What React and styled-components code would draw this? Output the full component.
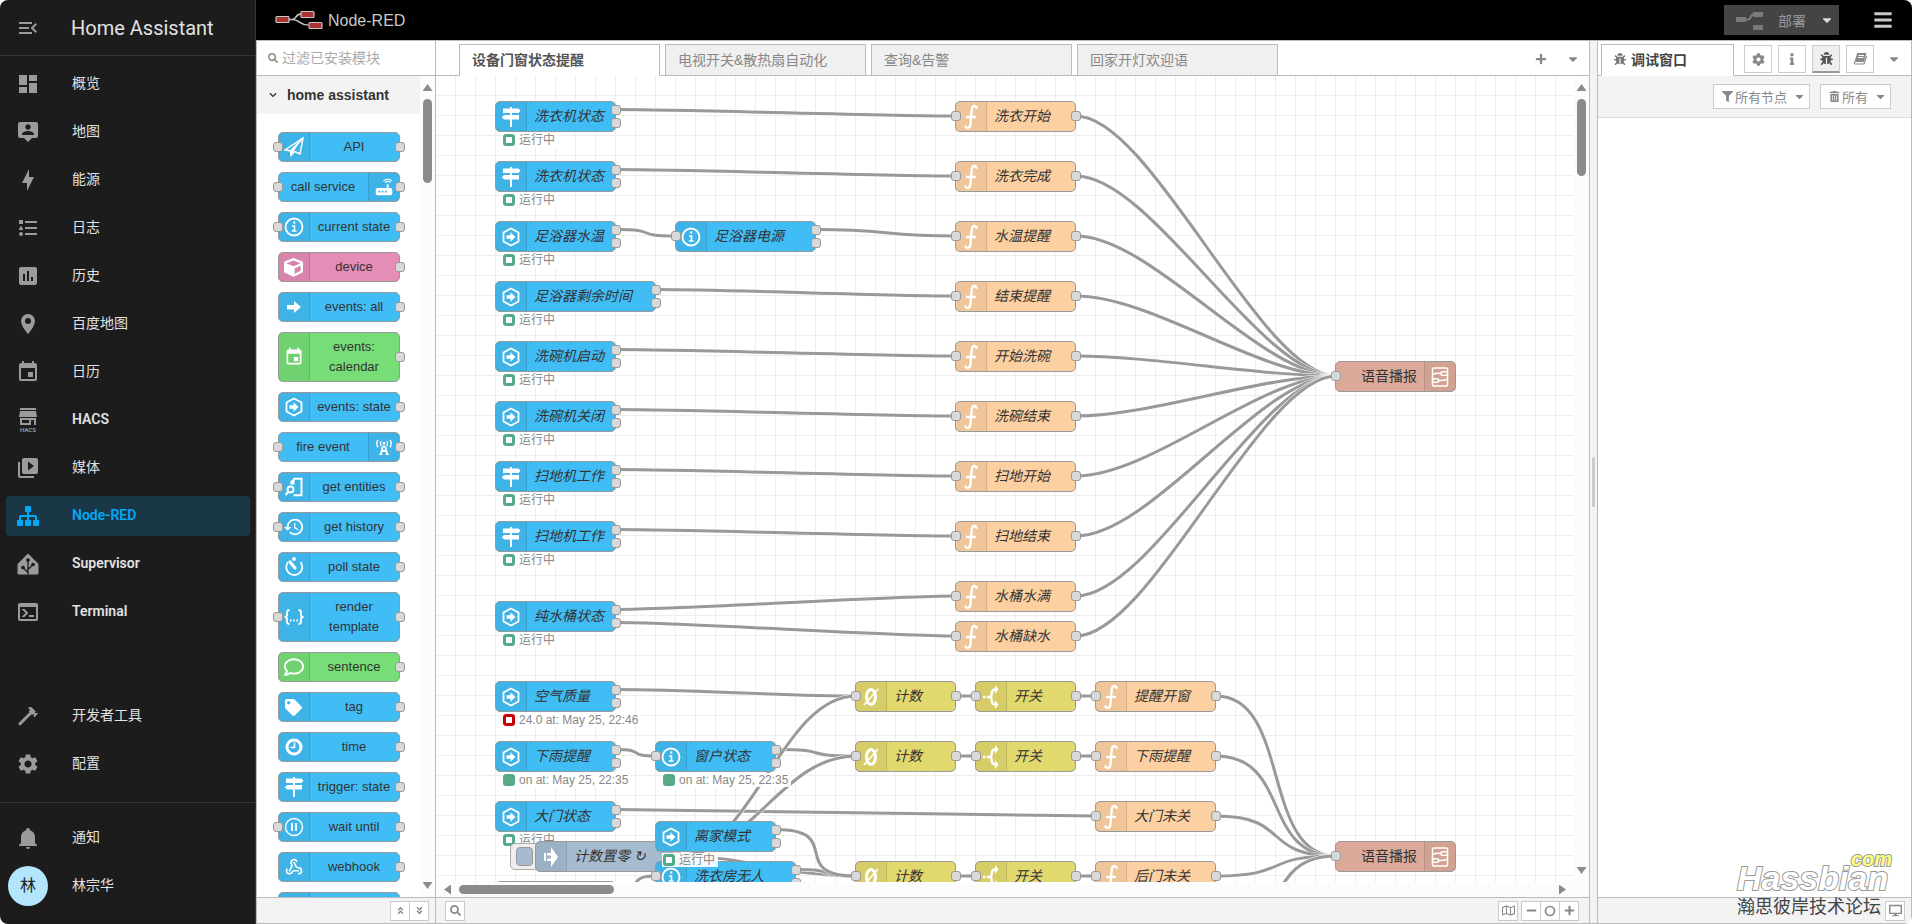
import React from 'react';
import styled, { createGlobalStyle, css } from 'styled-components';
import {
  FaAngleDoubleDown,
  FaAngleDoubleUp,
  FaBars,
  FaBug,
  FaCaretDown,
  FaChevronDown,
  FaCog,
  FaCube,
  FaDesktop,
  FaFilter,
  FaInfo,
  FaMinus,
  FaPlus,
  FaRegComment,
  FaRegMap,
  FaSearch,
  FaTag,
  FaTrashAlt,
} from 'react-icons/fa';
import { MdHistory, MdRouter, MdSettings } from 'react-icons/md';
import { Webhook } from 'lucide-react';

const NODE_WIDTH = 100;
const NODE_HEIGHT = 30;

const COLORS = {
  ha: '#41bdf5',
  device: '#e58cb7',
  green: '#77dd77',
  func: '#fdd0a2',
  logic: '#e2d96e',
  subflow: '#ddaa99',
  inject: '#a6bbcf',
};

/* ---------- icons ---------- */

const mdi = {
  menuOpen:
    'M21,15.61L19.59,17L14.58,12L19.59,7L21,8.39L17.44,12L21,15.61M3,6H16V8H3V6M3,13V11H13V13H3M3,18V16H16V18H3Z',
  dashboard: 'M13,3V9H21V3M13,21H21V11H13M3,21H11V15H3M3,13H11V3H3V13Z',
  map:
    'M20,2H4A2,2 0 0,0 2,4V16A2,2 0 0,0 4,18H8L12,22L16,18H20A2,2 0 0,0 22,16V4A2,2 0 0,0 20,2M12,4.3C13.5,4.3 14.7,5.5 14.7,7C14.7,8.5 13.5,9.7 12,9.7C10.5,9.7 9.3,8.5 9.3,7C9.3,5.5 10.5,4.3 12,4.3M18,15H6V14.1C6,12.1 10,11 12,11C14,11 18,12.1 18,14.1V15Z',
  energy: 'M11 15H6L13 1V9H18L11 23V15Z',
  logbook:
    'M5,9.5L7.5,14H2.5L5,9.5M3,4H7V8H3V4M5,20A2,2 0 0,0 7,18A2,2 0 0,0 5,16A2,2 0 0,0 3,18A2,2 0 0,0 5,20M9,5V7H21V5H9M9,19H21V17H9V19M9,13H21V11H9V13Z',
  history:
    'M9 17H7V10H9V17M13 17H11V7H13V17M17 17H15V13H17V17M19 3H5C3.89 3 3 3.89 3 5V19A2 2 0 0 0 5 21H19A2 2 0 0 0 21 19V5C21 3.89 20.1 3 19 3Z',
  marker:
    'M12,12A3,3 0 0,1 9,9A3,3 0 0,1 12,6A3,3 0 0,1 15,9A3,3 0 0,1 12,12M12,2A7,7 0 0,0 5,9C5,14.25 12,22 12,22C12,22 19,14.25 19,9A7,7 0 0,0 12,2Z',
  calendar:
    'M19,19H5V8H19M16,1V3H8V1H6V3H5C3.89,3 3,3.89 3,5V19A2,2 0 0,0 5,21H19A2,2 0 0,0 21,19V5C21,3.89 20.1,3 19,3H18V1M17,12H12V17H17V12Z',
  media:
    'M4 6H2V20C2 21.11 2.9 22 4 22H18V20H4V6M20 2H8C6.9 2 6 2.9 6 4V16C6 17.11 6.9 18 8 18H20C21.11 18 22 17.11 22 16V4C22 2.89 21.1 2 20 2M12 14.5V5.5L18 10L12 14.5Z',
  sitemap:
    'M9,2V8H11V11H5C3.89,11 3,11.89 3,13V16H1V22H7V16H5V13H11V16H9V22H15V16H13V13H19V16H17V22H23V16H21V13C21,11.89 20.11,11 19,11H13V8H15V2H9Z',
  console:
    'M20,19V7H4V19H20M20,3A2,2 0 0,1 22,5V19A2,2 0 0,1 20,21H4A2,2 0 0,1 2,19V5C2,3.89 2.9,3 4,3H20M13,17V15H18V17H13M9.58,13L5.57,9H8.4L11.7,12.3C12.09,12.69 12.09,13.33 11.7,13.72L8.42,17H5.59L9.58,13Z',
  hammer:
    'M2,19.63L13.43,8.2L12.72,7.5L14.14,6.07L12,3.89C13.2,2.7 15.09,2.7 16.27,3.89L19.87,7.5L18.45,8.91H21.29L22,9.62L18.45,13.21L17.74,12.5V9.62L16.27,11.04L15.56,10.33L4.13,21.76L2,19.63Z',
  bell:
    'M21,19V20H3V19L5,17V11C5,7.9 7.03,5.17 10,4.29C10,4.19 10,4.1 10,4A2,2 0 0,1 12,2A2,2 0 0,1 14,4C14,4.1 14,4.19 14,4.29C16.97,5.17 19,7.9 19,11V17L21,19M14,21A2,2 0 0,1 12,23A2,2 0 0,1 10,21',
};

const Mdi = ({ name, size = 24 }) => (
  <svg width={size} height={size} viewBox="0 0 24 24" fill="currentColor" fillRule="evenodd">
    <path d={mdi[name]} />
  </svg>
);

const HacsIcon = () => (
  <svg width="24" height="26" viewBox="0 0 24 26" fill="currentColor">
    <path d="M4 1H20V3H4ZM4 4H20L21 10H3ZM4 11H20V18H18V13H15V18H4ZM6 13V16H13V13Z" fillRule="evenodd" />
    <text x="12" y="25" fontSize="6" fontWeight="700" textAnchor="middle">HACS</text>
  </svg>
);

const SupervisorIcon = () => (
  <svg width="24" height="24" viewBox="0 0 24 24" fill="none">
    <path d="M12 1.500L22 11.500Q22.500 12 22.500 13V21Q22.500 22.500 21 22.500H3Q1.500 22.500 1.500 21V13Q1.500 12 2 11.500Z" fill="currentColor" />
    <g stroke="#1c1c1c" strokeWidth="1.300">
      <path d="M12 22.500V8M12 20.500L7 15.500M12 17.500L17 12.500" />
      <g fill="#1c1c1c">
        <circle cx="12" cy="8" r="1.200" />
        <circle cx="7" cy="15.500" r="1.200" />
        <circle cx="17" cy="12.500" r="1.200" />
      </g>
    </g>
  </svg>
);

const BookIcon = () => (
  <svg width="14" height="12" viewBox="0 0 14 12" fill="none" stroke="currentColor">
    <path d="M4.200 0H13.500L10.800 9H1.500Z" fill="currentColor" stroke="none" />
    <path d="M1.500 8.500Q.8 11 2.500 11H11L13.600 3" strokeWidth="1.200" />
    <path d="M5.500 2.500H11M5 4.500H10.300" stroke="#fff" strokeWidth="1" />
  </svg>
);

const ResetIcon = () => (
  <svg width="12" height="12" viewBox="0 0 12 12" fill="none" stroke="currentColor" strokeWidth="1.700">
    <circle cx="6" cy="6" r="4.500" />
  </svg>
);

const Line = ({ children, size = 20, width = 2 }) => (
  <svg
    width={size}
    height={size}
    viewBox="0 0 20 20"
    fill="none"
    stroke="currentColor"
    strokeWidth={width}
  >
    {children}
  </svg>
);

const Fill = ({ children, width = 20, height = 20 }) => (
  <svg width={width} height={height} viewBox={`0 0 ${width} ${height}`} fill="currentColor" fillRule="evenodd">
    {children}
  </svg>
);

const icons = {
  plane: (
    <Line width={1.5}>
      <path d="M1 13L19 1L16 17L10.500 14.500L7 18.500L6.500 14Z" />
      <path d="M7 14L18 2L9 15L7 18.500Z" fill="currentColor" stroke="none" />
      <path d="M6.500 14L18 2" />
    </Line>
  ),
  router: <MdRouter size={22} />,
  info: (
    <Line>
      <circle cx="10" cy="10" r="8.500" strokeWidth="1.800" />
      <path d="M8 9H10.500V14M7.800 14H12.500" strokeWidth="1.600" />
      <path d="M9.300 5.500H11.300" strokeWidth="2.200" />
    </Line>
  ),
  cube: <FaCube size={19} />,
  arrow: (
    <Fill>
      <path d="M3 8H10V4L17 10L10 16V12.500H3Z" />
    </Fill>
  ),
  calendar: <Mdi name="calendar" size={20} />,
  hex: (
    <Line>
      <path d="M10 1.500L17.500 5.500V14.500L10 18.500L2.500 14.500V5.500Z" strokeWidth="1.800" />
      <path d="M5.500 8.300H9.500V5.300L14.500 10L9.500 14.700V11.700H5.500Z" fill="currentColor" stroke="none" />
    </Line>
  ),
  tower: (
    <Line size={16} width={1.7}>
      <path d="M8.500 9.500L6 19M11.500 9.500L14 19M8.500 9.500H11.500M7 15H13" strokeWidth="2.200" />
      <path d="M4 19H8M12 19H16" />
      <circle cx="10" cy="5.500" r="1.800" fill="currentColor" stroke="none" />
      <path d="M6.500 2.500Q4.800 5.500 6.500 9M13.500 2.500Q15.200 5.500 13.500 9M2.500 1Q-.5 5.500 2.500 10.500M17.500 1Q20.500 5.500 17.500 10.500" />
    </Line>
  ),
  entities: (
    <Line width={2}>
      <path d="M7.500 7V5L10.500 1.800H17.500V18.200H9.500" />
      <path d="M6.500 7.500V5L10.500 1.500V7.500Z" fill="currentColor" stroke="none" />
      <circle cx="6.500" cy="12.500" r="3" />
      <path d="M4.500 14.500L1.500 18" />
    </Line>
  ),
  historyClock: <MdHistory size={22} />,
  timer: (
    <Line width={1.8}>
      <path d="M4 5A8 8 0 1 0 16.500 5" />
      <path d="M6 5L11 11" strokeWidth="3.200" strokeLinecap="round" />
      <circle cx="10" cy="2" r="1" fill="currentColor" />
    </Line>
  ),
  braces: (
    <Line width={1.8}>
      <path d="M5.500 3Q3 3 3 5.500V8Q3 10 .5 10Q3 10 3 12V14.500Q3 17 5.500 17M14.500 3Q17 3 17 5.500V8Q17 10 19.500 10Q17 10 17 12V14.500Q17 17 14.500 17" />
      <path d="M6 13.500H14" strokeDasharray="1.500 1.700" />
    </Line>
  ),
  comment: <FaRegComment size={20} />,
  tag: <FaTag size={17} />,
  clock: (
    <Line width={3}>
      <circle cx="10" cy="10" r="7" />
      <path d="M10.500 5.500V10.500H6.500" strokeWidth="1.600" />
    </Line>
  ),
  signs: (
    <Fill>
      <path d="M9 0H11V1.500H17.500L19.500 3.500L17.500 6H11V8H18V12.500H11V20H9V12.500H3L.8 10.200L3 8H9V6H2V1.500H9Z" />
    </Fill>
  ),
  pause: (
    <Line width={1.4}>
      <circle cx="10" cy="10" r="8.500" />
      <path d="M8 6V14M12 6V14" strokeWidth="1.800" />
    </Line>
  ),
  webhook: <Webhook size={18} strokeWidth={2.2} />,
  func: (
    <svg width="14" height="26" viewBox="0 0 14 26" fill="none" stroke="currentColor" strokeWidth="2.400" strokeLinecap="round">
      <path d="M12.500 3.800Q12 2 10 2Q8 2.200 7.700 6L6.500 20Q6 23.500 4.200 24Q2 24.300 1.500 22.500M3 13H11" />
    </svg>
  ),
  counter: (
    <svg width="18" height="22" viewBox="0 0 18 22" fill="none" stroke="currentColor" strokeWidth="3">
      <ellipse cx="9" cy="11" rx="4.500" ry="7.500" />
      <path d="M16 3L2 19" strokeWidth="1.600" />
    </svg>
  ),
  fork: (
    <svg width="18" height="24" viewBox="0 0 18 24" fill="none" stroke="currentColor" strokeWidth="2.400">
      <path d="M1 12H3.500M5 12H9M9 12L10 7Q10.500 4.500 13.500 4.500M9 12L10 17Q10.500 19.500 13.500 19.500" />
      <path d="M13 0L16.500 4.500L13 9ZM13 15L16.500 19.500L13 24Z" fill="currentColor" stroke="none" />
    </svg>
  ),
  inject: (
    <Fill width={16} height={22}>
      <path d="M1 7H3V15H1ZM4 7H8V1L15 11L8 21V15H4V12.500H8V9.500H4Z" />
    </Fill>
  ),
  subflow: (
    <svg width="18" height="20" viewBox="0 0 18 20" fill="none" stroke="currentColor" strokeWidth="1.500">
      <rect x="1.500" y="1" width="15" height="18" rx="1" />
      <path d="M1.500 7.500Q5 5.500 10 6.500M7.500 13.500Q12 14 16.500 12" />
      <rect x="10" y="4.800" width="6.500" height="3.400" rx="1" />
      <rect x="1.500" y="11.800" width="6" height="3.400" rx="1" />
    </svg>
  ),
};

const NodeRedLogo = () => (
  <svg width="48" height="20" viewBox="0 0 48 20" fill="none">
    <path d="M13 9.500H17C22 9.500 20 4 26 4M17 9.500C25 9.500 24 15 33 15" stroke="#c7c7c7" strokeWidth="1.600" />
    <g fill="#aa3333" stroke="#c7c7c7" strokeWidth="1.200">
      <rect x="1" y="6.500" width="13" height="6" rx="1" />
      <rect x="26" y="1.500" width="13" height="6" rx="1" />
      <rect x="34" y="12.500" width="13" height="6" rx="1" />
    </g>
  </svg>
);

const DeployIcon = () => (
  <svg width="28" height="20" viewBox="0 0 28 20">
    <path d="M9 9.500H12C16 9.500 13 4.500 18 4.500" fill="none" stroke="#7a7a7a" strokeWidth="2" />
    <g fill="#7a7a7a">
      <rect x="0" y="7" width="10" height="5" />
      <rect x="17" y="2" width="10" height="5" />
      <rect x="17" y="15" width="10" height="5" />
    </g>
  </svg>
);

/* ---------- data ---------- */

const menu = [
  { label: '概览', icon: <Mdi name="dashboard" /> },
  { label: '地图', icon: <Mdi name="map" /> },
  { label: '能源', icon: <Mdi name="energy" /> },
  { label: '日志', icon: <Mdi name="logbook" /> },
  { label: '历史', icon: <Mdi name="history" /> },
  { label: '百度地图', icon: <Mdi name="marker" /> },
  { label: '日历', icon: <Mdi name="calendar" /> },
  { label: 'HACS', icon: <HacsIcon />, strong: true },
  { label: '媒体', icon: <Mdi name="media" /> },
  { label: 'Node-RED', icon: <Mdi name="sitemap" />, active: true, strong: true },
  { label: 'Supervisor', icon: <SupervisorIcon />, strong: true },
  { label: 'Terminal', icon: <Mdi name="console" />, strong: true },
];

const paletteNodes = [
  { label: 'API', icon: 'plane', input: true },
  { label: 'call service', icon: 'router', input: true, right: true },
  { label: 'current state', icon: 'info', input: true },
  { label: 'device', icon: 'cube', color: COLORS.device },
  { label: 'events: all', icon: 'arrow' },
  { label: 'events: calendar', icon: 'calendar', color: COLORS.green },
  { label: 'events: state', icon: 'hex' },
  { label: 'fire event', icon: 'tower', input: true, right: true },
  { label: 'get entities', icon: 'entities', input: true },
  { label: 'get history', icon: 'historyClock', input: true },
  { label: 'poll state', icon: 'timer' },
  { label: 'render template', icon: 'braces', input: true },
  { label: 'sentence', icon: 'comment', color: COLORS.green },
  { label: 'tag', icon: 'tag' },
  { label: 'time', icon: 'clock' },
  { label: 'trigger: state', icon: 'signs' },
  { label: 'wait until', icon: 'pause', input: true },
  { label: 'webhook', icon: 'webhook' },
  { label: '', icon: 'marker' },
];

const tabs = ['设备门窗状态提醒', '电视开关&散热扇自动化', '查询&告警', '回家开灯欢迎语'];

const running = { text: '运行中', color: '#5a8', ring: true };

const ha = (id, label, x, y, icon, status, w = 120) => ({
  id, label, x, y, w, icon, status, color: COLORS.ha, outputs: 2, input: icon === 'info',
});
const fn = (id, label, x, y) => ({
  id, label, x, y, w: 120, icon: 'func', color: COLORS.func, outputs: 1, input: true,
});
const logic = (id, label, x, y, icon) => ({
  id, label, x, y, w: 100, icon, color: COLORS.logic, outputs: 1, input: true,
});
const speak = (id, y) => ({
  id, label: '语音播报', x: 900, y, w: 120, icon: 'subflow', color: COLORS.subflow, outputs: 0, input: true, right: true,
});

const nodes = [
  ha('a1', '洗衣机状态', 60, 40, 'signs', running),
  ha('a2', '洗衣机状态', 60, 100, 'signs', running),
  ha('a3', '足浴器水温', 60, 160, 'hex', running),
  ha('a3b', '足浴器电源', 240, 160, 'info', null, 140),
  ha('a4', '足浴器剩余时间', 60, 220, 'hex', running, 160),
  ha('a5', '洗碗机启动', 60, 280, 'hex', running),
  ha('a6', '洗碗机关闭', 60, 340, 'hex', running),
  ha('a7', '扫地机工作', 60, 400, 'signs', running),
  ha('a8', '扫地机工作', 60, 460, 'signs', running),
  ha('a9', '纯水桶状态', 60, 540, 'hex', running),
  fn('f1', '洗衣开始', 520, 40),
  fn('f2', '洗衣完成', 520, 100),
  fn('f3', '水温提醒', 520, 160),
  fn('f4', '结束提醒', 520, 220),
  fn('f5', '开始洗碗', 520, 280),
  fn('f6', '洗碗结束', 520, 340),
  fn('f7', '扫地开始', 520, 400),
  fn('f8', '扫地结束', 520, 460),
  fn('f9', '水桶水满', 520, 520),
  fn('f10', '水桶缺水', 520, 560),
  speak('s1', 300),
  ha('b1', '空气质量', 60, 620, 'hex', { text: '24.0 at: May 25, 22:46', color: '#c00', ring: true }),
  ha('b2', '下雨提醒', 60, 680, 'hex', { text: 'on at: May 25, 22:35', color: '#5a8' }),
  ha('b2b', '窗户状态', 220, 680, 'info', { text: 'on at: May 25, 22:35', color: '#5a8' }),
  ha('b3', '大门状态', 60, 740, 'hex', running),
  ha('b5', '', 60, 820, 'hex', null),
  {
    id: 'inject', label: '计数置零 ↻', x: 100, y: 780, w: 140, icon: 'inject', color: COLORS.inject, outputs: 1, button: true,
  },
  ha('b4', '洗衣房无人', 220, 800, 'info', null, 140),
  ha('home', '离家模式', 220, 760, 'hex', running),
  logic('c1', '计数', 420, 620, 'counter'),
  logic('c2', '计数', 420, 680, 'counter'),
  logic('c3', '计数', 420, 800, 'counter'),
  logic('k1', '开关', 540, 620, 'fork'),
  logic('k2', '开关', 540, 680, 'fork'),
  logic('k3', '开关', 540, 800, 'fork'),
  fn('g1', '提醒开窗', 660, 620),
  fn('g2', '下雨提醒', 660, 680),
  fn('g3', '大门未关', 660, 740),
  fn('g4', '后门未关', 660, 800),
  fn('g5', '', 660, 860),
  speak('s2', 780),
];

// [from, output index, to]
const wires = [
  ['a1', 0, 'f1'], ['a2', 0, 'f2'], ['a3', 0, 'a3b'], ['a3b', 0, 'f3'], ['a4', 0, 'f4'],
  ['a5', 0, 'f5'], ['a6', 0, 'f6'], ['a7', 0, 'f7'], ['a8', 0, 'f8'],
  ['a9', 0, 'f9'], ['a9', 1, 'f10'],
  ['f1', 0, 's1'], ['f2', 0, 's1'], ['f3', 0, 's1'], ['f4', 0, 's1'], ['f5', 0, 's1'],
  ['f6', 0, 's1'], ['f7', 0, 's1'], ['f8', 0, 's1'], ['f9', 0, 's1'], ['f10', 0, 's1'],
  ['b3', 0, 'g3'], ['b1', 0, 'c1'], ['b2', 0, 'b2b'], ['b2b', 0, 'c2'],
  ['inject', 0, 'c1'], ['inject', 0, 'c2'], ['inject', 0, 'c3'],
  ['b5', 0, 'b4'], ['b4', 0, 'c3'], ['home', 0, 'c3'],
  ['c1', 0, 'k1'], ['c2', 0, 'k2'], ['c3', 0, 'k3'],
  ['k1', 0, 'g1'], ['k2', 0, 'g2'], ['k3', 0, 'g4'],
  ['g1', 0, 's2'], ['g2', 0, 's2'], ['g3', 0, 's2'], ['g4', 0, 's2'], ['g5', 0, 's2'],
];

const nodeById = Object.fromEntries(nodes.map((node) => [node.id, node]));

const portOffset = (index, count) => (index - (count - 1) / 2) * 13;

const wirePath = ([from, index, to]) => {
  const source = nodeById[from];
  const target = nodeById[to];
  const x1 = source.x + source.w;
  const y1 = source.y + portOffset(index, source.outputs);
  const x2 = target.x;
  const y2 = target.y;
  const delta = Math.hypot(x2 - x1, y2 - y1);
  const scale = delta < NODE_WIDTH ? 0.75 - 0.75 * ((NODE_WIDTH - delta) / NODE_WIDTH) : 0.75;
  const reach = scale * NODE_WIDTH;
  return `M${x1} ${y1}C${x1 + reach} ${y1} ${x2 - reach} ${y2} ${x2} ${y2}`;
};

/* ---------- components ---------- */

const Ports = ({ input, outputs }) => (
  <>
    {input && <Port $side="left" $offset={0} />}
    {Array.from({ length: outputs }, (_, i) => (
      <Port key={i} $side="right" $offset={portOffset(i, outputs)} />
    ))}
  </>
);

const FlowNode = ({ node }) => (
  <FlowNodeBox
    $color={node.color}
    style={{ left: node.x, top: node.y - NODE_HEIGHT / 2, width: node.w }}
  >
    {node.button && (
      <InjectFrame>
        <InjectButton type="button" aria-label={node.label} />
      </InjectFrame>
    )}
    <FlowNodeBody $color={node.color} $right={node.right}>
      <IconCell $right={node.right}>{icons[node.icon]}</IconCell>
      <FlowLabel $right={node.right}>{node.label}</FlowLabel>
    </FlowNodeBody>
    <Ports input={node.input} outputs={node.outputs} />
    {node.status && (
      <Status>
        <StatusDot $color={node.status.color} $ring={node.status.ring} />
        {node.status.text}
      </Status>
    )}
  </FlowNodeBox>
);

const ScrollBar = ({ horizontal, length }) => (
  <ScrollTrack $horizontal={horizontal}>
    <ScrollArrow $dir={horizontal ? 'left' : 'up'} />
    <ScrollThumb $horizontal={horizontal} $length={length} />
    <ScrollArrow $dir={horizontal ? 'right' : 'down'} />
  </ScrollTrack>
);

const MenuEntry = ({ item }) => (
  <MenuLink href="#" $active={item.active} $strong={item.strong}>
    <MenuIcon>{item.icon}</MenuIcon>
    <MenuText>{item.label}</MenuText>
  </MenuLink>
);

const Sidebar = () => (
  <SidebarBox>
    <SidebarHeader>
      <MenuToggle type="button" aria-label="menu">
        <Mdi name="menuOpen" />
      </MenuToggle>
      Home Assistant
    </SidebarHeader>
    <MenuList>
      {menu.map((item) => (
        <MenuEntry key={item.label} item={item} />
      ))}
      <MenuSpacer />
      <MenuEntry item={{ label: '开发者工具', icon: <Mdi name="hammer" /> }} />
      <MenuEntry item={{ label: '配置', icon: <MdSettings size={24} /> }} />
    </MenuList>
    <MenuFooter>
      <MenuEntry item={{ label: '通知', icon: <Mdi name="bell" /> }} />
      <MenuEntry item={{ label: '林宗华', icon: <Avatar>林</Avatar> }} />
    </MenuFooter>
  </SidebarBox>
);

const Palette = () => (
  <PaletteBox>
    <PaletteSearch>
      <FaSearch size={10} />
      <PaletteInput type="text" aria-label="过滤已安装模块" placeholder="过滤已安装模块" />
    </PaletteSearch>
    <PaletteScroll>
      <PaletteContent>
        <CategoryHeader type="button">
          <FaChevronDown size={8} />
          home assistant
        </CategoryHeader>
        <PaletteList>
          {paletteNodes.map((node) => (
            <PaletteNode key={node.icon} $color={node.color || COLORS.ha} $right={node.right}>
              <IconCell $right={node.right}>
                {icons[node.icon] || <Mdi name={node.icon} size={20} />}
              </IconCell>
              <PaletteLabel>{node.label}</PaletteLabel>
              <Ports input={node.input} outputs={1} />
            </PaletteNode>
          ))}
        </PaletteList>
      </PaletteContent>
      <ScrollBar length={84} />
    </PaletteScroll>
    <Footer>
      <ButtonGroup>
        <FooterButton type="button" aria-label="collapse all"><FaAngleDoubleUp size={9} /></FooterButton>
        <FooterButton type="button" aria-label="expand all"><FaAngleDoubleDown size={9} /></FooterButton>
      </ButtonGroup>
    </Footer>
  </PaletteBox>
);

const Workspace = () => (
  <WorkspaceBox>
    <TabBar>
      {tabs.map((tab, i) => (
        <Tab key={tab} type="button" $active={i === 0}>{tab}</Tab>
      ))}
      <TabActions>
        <BareButton type="button" aria-label="add flow"><FaPlus size={12} /></BareButton>
        <BareButton type="button" aria-label="list flows"><FaCaretDown size={14} /></BareButton>
      </TabActions>
    </TabBar>
    <CanvasRow>
      <Canvas>
        <Wires>
          {wires.map((wire) => (
            <g key={wire.join('-')}>
              <path d={wirePath(wire)} stroke="#fff" strokeWidth="4" />
              <path d={wirePath(wire)} stroke="#999" strokeWidth="3" />
            </g>
          ))}
        </Wires>
        {nodes.map((node) => (
          <FlowNode key={node.id} node={node} />
        ))}
      </Canvas>
      <ScrollBar length={77} />
    </CanvasRow>
    <ScrollBar horizontal length={155} />
    <Footer $spread>
      <ButtonGroup>
        <FooterButton type="button" aria-label="search"><FaSearch size={11} /></FooterButton>
      </ButtonGroup>
      <FooterRight>
        <ButtonGroup>
          <FooterButton type="button" aria-label="navigator"><FaRegMap size={13} /></FooterButton>
        </ButtonGroup>
        <ButtonGroup>
          <FooterButton type="button" aria-label="zoom out"><FaMinus size={11} /></FooterButton>
          <FooterButton type="button" aria-label="zoom reset"><ResetIcon /></FooterButton>
          <FooterButton type="button" aria-label="zoom in"><FaPlus size={11} /></FooterButton>
        </ButtonGroup>
      </FooterRight>
    </Footer>
  </WorkspaceBox>
);

const DebugPanel = () => (
  <DebugBox>
    <DebugTabs>
      <DebugTab type="button">
        <FaBug size={12} />
        调试窗口
      </DebugTab>
      <IconTabs>
        <IconTab type="button" aria-label="config"><FaCog size={13} /></IconTab>
        <IconTab type="button" aria-label="info"><FaInfo size={12} /></IconTab>
        <IconTab type="button" aria-label="debug" $active><FaBug size={13} /></IconTab>
        <IconTab type="button" aria-label="help"><BookIcon /></IconTab>
      </IconTabs>
      <BareButton type="button" aria-label="more"><FaCaretDown size={14} /></BareButton>
    </DebugTabs>
    <DebugToolbar>
      <ToolbarButton type="button">
        <FaFilter size={11} />
        所有节点
        <ToolbarCaret><FaCaretDown size={13} /></ToolbarCaret>
      </ToolbarButton>
      <ToolbarButton type="button">
        <FaTrashAlt size={11} />
        所有
        <ToolbarCaret><FaCaretDown size={13} /></ToolbarCaret>
      </ToolbarButton>
    </DebugToolbar>
    <DebugContent />
    <Footer>
      <ButtonGroup>
        <FooterButton type="button" aria-label="open window"><FaDesktop size={13} /></FooterButton>
      </ButtonGroup>
    </Footer>
    <Watermark>
      <WatermarkName>Hassbian</WatermarkName>
      <WatermarkCom>com</WatermarkCom>
      <WatermarkText>瀚思彼岸技术论坛</WatermarkText>
    </Watermark>
  </DebugBox>
);

const App = () => (
  <>
    <GlobalStyle />
    <Shell>
      <Sidebar />
      <Editor>
        <Header>
          <NodeRedLogo />
          <HeaderTitle>Node-RED</HeaderTitle>
          <DeployButton type="button">
            <DeployIcon />
            部署
            <FaCaretDown size={14} color="#ddd" />
          </DeployButton>
          <HeaderMenu type="button" aria-label="main menu"><FaBars size={20} /></HeaderMenu>
        </Header>
        <Panels>
          <Palette />
          <Workspace />
          <Separator><Grip /></Separator>
          <DebugPanel />
        </Panels>
      </Editor>
    </Shell>
  </>
);

/* ---------- styles ---------- */

const GlobalStyle = createGlobalStyle`
  * {
    box-sizing: border-box;
  }
  body {
    margin: 0;
    background: #fff;
    font-family: "Liberation Sans", "Noto Sans CJK SC", sans-serif;
    font-size: 14px;
    color: #333;
  }
  button, input {
    font: inherit;
    color: inherit;
    margin: 0;
    padding: 0;
  }
  svg {
    display: block;
    flex-shrink: 0;
  }
`;

const Shell = styled.div`
  display: flex;
  height: 100vh;
  border-radius: 8px;
  overflow: hidden;
`;

const SidebarBox = styled.nav`
  display: flex;
  flex-direction: column;
  flex: 0 0 256px;
  background: #1c1c1c;
  border-right: 1px solid #343434;
  font-family: Roboto, "Noto Sans CJK SC", sans-serif;
  color: #e1e1e1;
`;

const SidebarHeader = styled.div`
  display: flex;
  align-items: center;
  gap: 31px;
  height: 56px;
  padding-left: 16px;
  border-bottom: 1px solid #343434;
  font-size: 20px;
`;

const MenuToggle = styled.button`
  border: none;
  background: none;
  color: #9b9b9b;
`;

const MenuList = styled.div`
  display: flex;
  flex-direction: column;
  flex: 1;
  gap: 8px;
  padding: 8px 5px 18px 6px;
  min-height: 0;
`;

const MenuSpacer = styled.div`
  flex: 1;
`;

const MenuLink = styled.a`
  display: flex;
  align-items: center;
  gap: 24px;
  height: 40px;
  flex-shrink: 0;
  border-radius: 4px;
  background: ${({ $active }) => ($active ? '#193747' : 'none')};
  color: ${({ $active }) => ($active ? '#03a9f4' : '#e1e1e1')};
  font-weight: ${({ $strong }) => ($strong ? 600 : 400)};
  line-height: 20px;
  text-decoration: none;

  svg {
    color: ${({ $active }) => ($active ? '#03a9f4' : '#9b9b9b')};
  }
`;

const MenuIcon = styled.span`
  display: flex;
  justify-content: center;
  width: 40px;
  margin-left: 2px;
`;

const MenuText = styled.span`
  padding-bottom: 2px;
`;

const MenuFooter = styled.div`
  display: flex;
  flex-direction: column;
  gap: 8px;
  padding: 15px 5px 18px 6px;
  border-top: 1px solid #343434;
`;

const Avatar = styled.span`
  display: flex;
  align-items: center;
  justify-content: center;
  width: 40px;
  height: 40px;
  border-radius: 50%;
  background: #b3e5fc;
  color: #222;
  font-size: 16px;
  font-weight: 400;
`;

const Editor = styled.div`
  display: flex;
  flex-direction: column;
  flex: 1;
  min-width: 0;
`;

const Header = styled.header`
  display: flex;
  align-items: center;
  height: 40px;
  padding: 0 19px;
  background: #000;
  color: #c7c7c7;
`;

const HeaderTitle = styled.span`
  flex: 1;
  padding: 2px 0 0 5px;
  font-size: 16px;
`;

const DeployButton = styled.button`
  display: flex;
  align-items: center;
  justify-content: space-between;
  width: 115px;
  height: 30px;
  padding: 0 5px 0 12px;
  border: none;
  background: #444;
  color: #999;
`;

const HeaderMenu = styled.button`
  margin-left: 34px;
  border: none;
  background: none;
`;

const Panels = styled.main`
  display: flex;
  flex: 1;
  min-height: 0;
  background: #f3f3f3;
  border: 1px solid #bbb;
  border-right: none;
`;

const PaletteBox = styled.section`
  display: flex;
  flex-direction: column;
  flex: 0 0 179px;
  border-right: 1px solid #bbb;
  background: #fff;
`;

const PaletteSearch = styled.label`
  display: flex;
  align-items: center;
  gap: 4px;
  height: 35px;
  padding-left: 11px;
  border-bottom: 1px solid #bbb;
  color: #888;
`;

const PaletteInput = styled.input`
  width: 140px;
  border: none;
  outline: none;

  &::placeholder {
    color: #aaa;
  }
`;

const PaletteScroll = styled.div`
  display: flex;
  flex: 1;
  min-height: 0;
`;

const PaletteContent = styled.div`
  flex: 1;
  overflow: hidden;
`;

const CategoryHeader = styled.button`
  display: flex;
  align-items: center;
  gap: 10px;
  width: 100%;
  height: 38px;
  padding-left: 12px;
  border: none;
  background: #f3f3f3;
  font-weight: 700;
`;

const PaletteList = styled.div`
  display: flex;
  flex-direction: column;
  align-items: center;
  gap: 10px;
  padding-top: 18px;
`;

const nodeFrame = css`
  border: 1px solid #999;
  border-radius: 5px;
  background: ${({ $color }) => $color};
`;

const PaletteNode = styled.div`
  ${nodeFrame}
  position: relative;
  display: flex;
  flex-direction: ${({ $right }) => ($right ? 'row-reverse' : 'row')};
  width: 122px;
  min-height: 30px;
`;

const IconCell = styled.span`
  display: flex;
  align-items: center;
  justify-content: center;
  flex: 0 0 31px;
  background: rgba(0, 0, 0, 0.05);
  border: 0 solid rgba(0, 0, 0, 0.1);
  border-width: ${({ $right }) => ($right ? '0 0 0 1px' : '0 1px 0 0')};
  color: #fff;
`;

const PaletteLabel = styled.span`
  flex: 1;
  padding: 4px;
  font-size: 13px;
  line-height: 20px;
  text-align: center;
`;

const Port = styled.span`
  position: absolute;
  top: calc(50% - 5px + ${({ $offset }) => $offset}px);
  ${({ $side }) => $side}: -6px;
  width: 10px;
  height: 10px;
  border: 1px solid #999;
  border-radius: 3px;
  background: #d9d9d9;
`;

const ScrollTrack = styled.div`
  display: flex;
  flex-direction: ${({ $horizontal }) => ($horizontal ? 'row' : 'column')};
  align-items: center;
  flex: 0 0 15px;
  gap: 8px;
  padding: ${({ $horizontal }) => ($horizontal ? '0 23px 0 8px' : '8px 0')};
  background: #fcfcfc;
`;

const ScrollThumb = styled.div`
  width: ${({ $horizontal, $length }) => ($horizontal ? $length : 9)}px;
  height: ${({ $horizontal, $length }) => ($horizontal ? 9 : $length)}px;
  border-radius: 5px;
  background: #8b8b8b;
`;

const arrowShapes = {
  up: 'polygon(50% 0, 100% 100%, 0 100%)',
  down: 'polygon(0 0, 100% 0, 50% 100%)',
  left: 'polygon(0 50%, 100% 0, 100% 100%)',
  right: 'polygon(0 0, 100% 50%, 0 100%)',
};

const ScrollArrow = styled.span`
  width: ${({ $dir }) => ($dir === 'up' || $dir === 'down' ? 10 : 7)}px;
  height: ${({ $dir }) => ($dir === 'up' || $dir === 'down' ? 7 : 10)}px;
  background: #8b8b8b;
  clip-path: ${({ $dir }) => arrowShapes[$dir]};
  margin-top: ${({ $dir }) => ($dir === 'down' ? 'auto' : 0)};
  margin-left: ${({ $dir }) => ($dir === 'right' ? 'auto' : 0)};
`;

const Footer = styled.footer`
  display: flex;
  align-items: center;
  justify-content: ${({ $spread }) => ($spread ? 'space-between' : 'flex-end')};
  flex: 0 0 26px;
  padding: ${({ $spread }) => ($spread ? '0 10px 0 9px' : '0 6px')};
  border-top: 1px solid #bbb;
  background: #f3f3f3;
`;

const FooterRight = styled.div`
  display: flex;
  gap: 3px;
`;

const ButtonGroup = styled.div`
  display: flex;
`;

const FooterButton = styled.button`
  display: flex;
  align-items: center;
  justify-content: center;
  width: 20px;
  height: 20px;
  border: 1px solid #ccc;
  background: #fff;
  color: #888;

  & + & {
    margin-left: -1px;
  }
`;

const WorkspaceBox = styled.section`
  display: flex;
  flex-direction: column;
  flex: 1;
  min-width: 0;
  border-right: 1px solid #bbb;
  background: #fff;
`;

const TabBar = styled.div`
  display: flex;
  align-items: flex-end;
  gap: 5px;
  flex: 0 0 35px;
  padding-left: 23px;
  box-shadow: inset 0 -1px #bbb;
`;

const Tab = styled.button`
  flex: 0 1 201px;
  height: 32px;
  padding: 0 12px 3px;
  overflow: hidden;
  border: 1px solid #bbb;
  border-bottom-color: ${({ $active }) => ($active ? '#fff' : '#bbb')};
  background: ${({ $active }) => ($active ? '#fff' : '#f0f0f0')};
  color: ${({ $active }) => ($active ? '#555' : '#888')};
  font-weight: ${({ $active }) => ($active ? 700 : 400)};
  text-align: left;
  white-space: nowrap;
`;

const TabActions = styled.div`
  display: flex;
  gap: 19px;
  height: 34px;
  margin-left: auto;
  padding-right: 9px;
`;

const BareButton = styled.button`
  display: flex;
  align-items: center;
  border: none;
  background: none;
  color: #888;
`;

const CanvasRow = styled.div`
  display: flex;
  flex: 1;
  min-height: 0;
`;

const Canvas = styled.div`
  position: relative;
  flex: 1;
  overflow: hidden;
  background-image: linear-gradient(to right, transparent 19px, #eee 19px),
    linear-gradient(to bottom, transparent 19px, #eee 19px);
  background-size: 20px 20px;
`;

const Wires = styled.svg`
  position: absolute;
  width: 100%;
  height: 100%;
  fill: none;
`;

const FlowNodeBox = styled.div`
  position: absolute;
  height: 30px;
  border: 0 solid transparent;
  border-width: 0 1px;
`;

const FlowNodeBody = styled.div`
  ${nodeFrame}
  position: relative;
  display: flex;
  flex-direction: ${({ $right }) => ($right ? 'row-reverse' : 'row')};
  height: 31px;
  margin: 0 -1px 0 -2px;
`;

const FlowLabel = styled.span`
  flex: 1;
  padding: 0 7px;
  line-height: 28px;
  white-space: nowrap;
  font-style: ${({ $right }) => ($right ? 'normal' : 'italic')};
  text-align: ${({ $right }) => ($right ? 'right' : 'left')};
`;

const InjectFrame = styled.div`
  position: absolute;
  top: 2px;
  left: -27px;
  width: 32px;
  height: 27px;
  padding: 3px 5px;
  border: 1px solid #aaa;
  border-radius: 5px;
  background: #eee;
`;

const InjectButton = styled.button`
  display: block;
  width: 17px;
  height: 19px;
  border: 1px solid #999;
  border-radius: 4px;
  background: ${COLORS.inject};
`;

const Status = styled.div`
  position: absolute;
  top: 32px;
  left: 5px;
  display: flex;
  align-items: center;
  gap: 4px;
  height: 14px;
  padding: 0 3px 0 1px;
  background: rgba(255, 255, 255, 0.9);
  color: #888;
  font-size: 12px;
  line-height: 14px;
  white-space: nowrap;
`;

const StatusDot = styled.span`
  width: 12px;
  height: 12px;
  border: 3px solid ${({ $color }) => $color};
  border-radius: 3px;
  background: ${({ $ring, $color }) => ($ring ? '#fff' : $color)};
`;

const Separator = styled.div`
  display: flex;
  align-items: center;
  justify-content: center;
  flex: 0 0 7px;
`;

const Grip = styled.div`
  width: 3px;
  height: 50px;
  border-radius: 2px;
  background: #ccc;
`;

const DebugBox = styled.aside`
  position: relative;
  display: flex;
  flex-direction: column;
  flex: 0 0 315px;
  border: 0 solid #bbb;
  border-width: 0 1px;
  background: #fff;
`;

const DebugTabs = styled.div`
  display: flex;
  align-items: flex-end;
  flex: 0 0 35px;
  padding: 0 10px 0 3px;
  box-shadow: inset 0 -1px #bbb;

  > ${BareButton} {
    height: 34px;
    margin-left: auto;
  }
`;

const DebugTab = styled.button`
  display: flex;
  align-items: center;
  gap: 5px;
  width: 133px;
  height: 32px;
  padding: 0 12px 3px;
  border: 1px solid #bbb;
  border-bottom-color: #fff;
  background: #fff;
  color: #444;
  font-weight: 700;

  svg {
    color: #777;
  }
`;

const IconTabs = styled.div`
  display: flex;
  gap: 6px;
  padding: 0 0 3px 10px;
`;

const IconTab = styled.button`
  display: flex;
  align-items: center;
  justify-content: center;
  width: 28px;
  height: 28px;
  border: 1px solid #ccc;
  border-bottom: ${({ $active }) => ($active ? '2px solid #999' : '1px solid #ccc')};
  background: ${({ $active }) => ($active ? '#efefef' : '#fff')};
  color: ${({ $active }) => ($active ? '#555' : '#888')};
`;

const DebugToolbar = styled.div`
  display: flex;
  align-items: center;
  justify-content: flex-end;
  gap: 10px;
  height: 42px;
  padding-right: 20px;
  border-bottom: 1px solid #ddd;
  background: #f3f3f3;
`;

const ToolbarButton = styled.button`
  display: flex;
  align-items: center;
  gap: 2px;
  height: 25px;
  padding: 0 3px 1px 8px;
  border: 1px solid #ccc;
  background: #fff;
  color: #888;
  font-size: 13px;
`;

const ToolbarCaret = styled.span`
  padding-left: 4px;
`;

const DebugContent = styled.div`
  flex: 1;
`;

const Watermark = styled.div`
  position: absolute;
  right: 24px;
  bottom: 4px;
  width: 150px;
`;

const outline = css`
  font-weight: 700;
  font-style: italic;
  paint-order: stroke fill;
  -webkit-text-stroke: 2px #999;
`;

const WatermarkName = styled.div`
  ${outline}
  color: #fff;
  font-size: 34px;
  line-height: 34px;
`;

const WatermarkCom = styled.div`
  ${outline}
  position: absolute;
  top: -12px;
  right: -5px;
  color: #ffff80;
  font-size: 20px;
  line-height: 20px;
`;

const WatermarkText = styled.div`
  color: #444;
  font-size: 18px;
  line-height: 24px;
`;

export default App;
